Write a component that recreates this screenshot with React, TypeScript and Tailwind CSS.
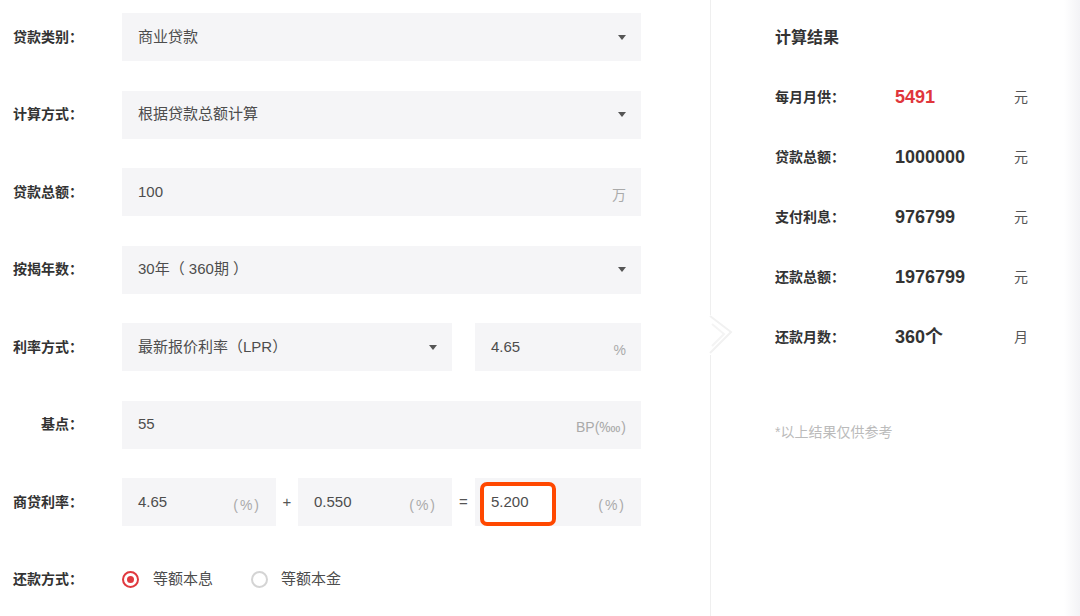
import type { ReactNode } from 'react'

const FIELD = 'flex items-center justify-between h-[48px] bg-[#f5f5f7] pl-[16px] pr-[15px] text-[15px] text-[#4d4d4d]'

function Caret() {
  return (
    <svg width="8" height="5" viewBox="0 0 8 5" className="shrink-0">
      <path d="M0 0h8L4 5z" fill="#555" />
    </svg>
  )
}

function Row({ label, children }: { label: string; children: ReactNode }) {
  return (
    <div className="flex items-center h-[48px]">
      <div className="w-[83px] text-right text-[14px] font-bold text-[#333] whitespace-nowrap">{label}</div>
      <div className="ml-[39px] w-[519px] flex items-center">{children}</div>
    </div>
  )
}

function Suffix({ children }: { children: ReactNode }) {
  return <span className="text-[14px] text-[#aaa] translate-y-[3px]">{children}</span>
}

const RESULTS = [
  { label: '每月月供：', value: '5491', unit: '元', red: true },
  { label: '贷款总额：', value: '1000000', unit: '元' },
  { label: '支付利息：', value: '976799', unit: '元' },
  { label: '还款总额：', value: '1976799', unit: '元' },
  { label: '还款月数：', value: '360个', unit: '月' },
]

export default function App() {
  return (
    <div className="flex w-[1080px] h-[616px] overflow-hidden bg-white font-['Liberation_Sans','Noto_Sans_CJK_SC',sans-serif]">
      {/* Form */}
      <div className="w-[710px] shrink-0 pt-[13px] flex flex-col gap-[29.5px]">
        <Row label="贷款类别：">
          <div className={`${FIELD} w-full`}>
            <span>商业贷款</span>
            <Caret />
          </div>
        </Row>
        <Row label="计算方式：">
          <div className={`${FIELD} w-full`}>
            <span>根据贷款总额计算</span>
            <Caret />
          </div>
        </Row>
        <Row label="贷款总额：">
          <div className={`${FIELD} w-full`}>
            <span>100</span>
            <Suffix>万</Suffix>
          </div>
        </Row>
        <Row label="按揭年数：">
          <div className={`${FIELD} w-full`}>
            <span>30年（ 360期 ）</span>
            <Caret />
          </div>
        </Row>
        <Row label="利率方式：">
          <div className={`${FIELD} w-[330px]`}>
            <span>最新报价利率（LPR）</span>
            <Caret />
          </div>
          <div className={`${FIELD} w-[166px] ml-[23px]`}>
            <span>4.65</span>
            <Suffix>%</Suffix>
          </div>
        </Row>
        <Row label="基点：">
          <div className={`${FIELD} w-full`}>
            <span>55</span>
            <Suffix>BP(‱)</Suffix>
          </div>
        </Row>
        <Row label="商贷利率：">
          <div className={`${FIELD} w-[154px]`}>
            <span>4.65</span>
            <Suffix><span className="tracking-[2px]">(%)</span></Suffix>
          </div>
          <span className="w-[22px] text-center text-[15px] text-[#555]">+</span>
          <div className={`${FIELD} w-[154px]`}>
            <span>0.550</span>
            <Suffix><span className="tracking-[2px]">(%)</span></Suffix>
          </div>
          <span className="w-[23px] text-center text-[15px] text-[#555]">=</span>
          <div className={`${FIELD} w-[166px] relative`}>
            <div className="absolute left-[5px] top-[4px] w-[76px] h-[44px] rounded-[7px] border-4 border-[#ff4800] bg-white" />
            <span className="relative">5.200</span>
            <Suffix><span className="tracking-[2px]">(%)</span></Suffix>
          </div>
        </Row>
        <Row label="还款方式：">
          <div className="flex items-center text-[15px] text-[#4d4d4d]">
            <span className="w-[17px] h-[17px] rounded-full border-2 border-[#e0393e] flex items-center justify-center">
              <span className="w-[7px] h-[7px] rounded-full bg-[#e0393e]" />
            </span>
            <span className="ml-[14px]">等额本息</span>
            <span className="ml-[38px] w-[17px] h-[17px] rounded-full border-2 border-[#d4d4d4]" />
            <span className="ml-[13px]">等额本金</span>
          </div>
        </Row>
      </div>

      {/* Results */}
      <div className="relative flex-1 border-l border-[#efefef] pl-[64px] pt-[26px]">
        <svg width="28" height="44" viewBox="0 0 28 44" className="absolute left-[-2px] top-[313px]">
          <rect x="0" y="2" width="4" height="40" fill="#fff" />
          <path d="M1 3 L22 19 L1 40" fill="none" stroke="#f1f1f1" strokeWidth="2" />
          <path d="M3 11 L15 21 L3 33" fill="none" stroke="#f4f4f4" strokeWidth="2" />
        </svg>
        <div className="h-[24px] flex items-center text-[16px] font-bold text-[#333]">计算结果</div>
        <div className="mt-[17px]">
          {RESULTS.map((r) => (
            <div key={r.label} className="flex items-center h-[60px]">
              <span className="w-[120px] text-[14px] font-bold text-[#333]">{r.label}</span>
              <span className={`w-[119px] text-[18px] font-semibold ${r.red ? 'text-[#e0363c]' : 'text-[#333]'}`}>
                {r.value}
              </span>
              <span className="text-[14px] text-[#555]">{r.unit}</span>
            </div>
          ))}
        </div>
        <div className="mt-[55px] text-[14px] text-[#bbb]">*以上结果仅供参考</div>
      </div>
      <div className="w-[16px] shrink-0 bg-linear-to-r from-white to-[#f3f3f6]" />
    </div>
  )
}
